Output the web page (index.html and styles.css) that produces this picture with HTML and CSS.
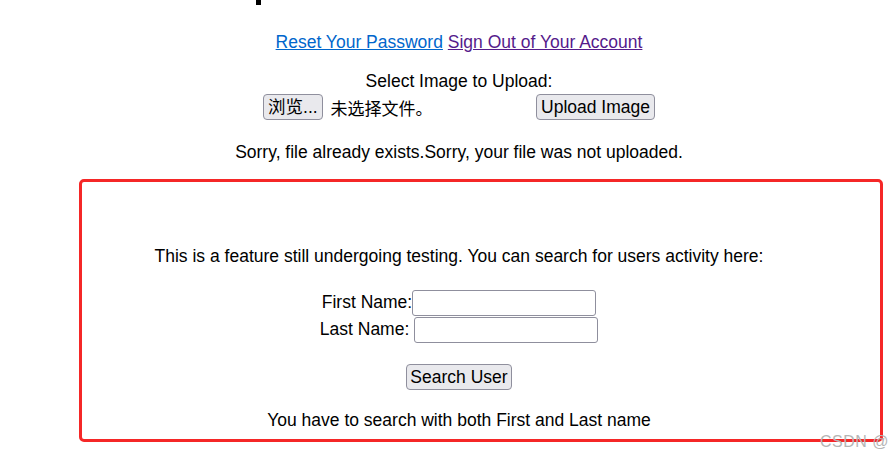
FILE: index.html
```html
<!DOCTYPE html>
<html>
<head>
<meta charset="utf-8">
<link rel="stylesheet" href="styles.css">
</head>
<body>
<div class="page">
  <div class="descender"></div>
  <p class="links"><a href="#" class="reset">Reset Your Password</a> <a href="#" class="signout">Sign Out of Your Account</a></p>
  <form class="upload">
    <div class="line">Select Image to Upload:</div>
    <div class="row">
      <span class="file"><button type="button" class="btn">浏览...</button> <span class="nofile">未选择文件。</span></span>
      <button type="button" class="btn">Upload Image</button>
    </div>
  </form>
  <p class="msg">Sorry, file already exists.Sorry, your file was not uploaded.</p>
  <div class="search">
    <div class="line">This is a feature still undergoing testing. You can search for users activity here:</div>
    <div class="field first">First Name:<input type="text" class="inp"></div>
    <div class="field">Last Name: <input type="text" class="inp"></div>
    <div class="submit"><button type="button" class="btn">Search User</button></div>
    <div class="line">You have to search with both First and Last name</div>
  </div>
</div>
<span class="watermark">CSDN @</span>
</body>
</html>
```
FILE: styles.css
```css
html, body {
  margin: 0;
  padding: 0;
  background: #fff;
  overflow: hidden;
}
body {
  font-family: "Liberation Sans", Arial, "Noto Sans CJK SC", sans-serif;
  font-size: 17.5px;
  color: #000;
  width: 891px;
  height: 450px;
  position: relative;
}
.page {
  width: 918px;
  text-align: center;
}
.descender {
  width: 5px;
  height: 5px;
  background: #000;
  margin-left: 256px;
}
.links {
  margin: 26px 0 0;
  line-height: 22px;
}
.links a {
  text-decoration: underline;
}
.reset { color: #0066cc; }
.signout { color: #551a8b; }
.upload {
  margin: 17px 0 0;
}
.line {
  line-height: 22px;
}
.row {
  margin-top: 2px;
  height: 26px;
  display: flex;
  justify-content: center;
  align-items: center;
  gap: 5px;
}
.file {
  display: inline-flex;
  align-items: center;
  width: 268px;
  text-align: left;
}
.nofile {
  margin-left: 8px;
  font-family: "Noto Sans CJK SC", sans-serif;
  font-size: 17px;
}
.btn {
  font-family: "Liberation Sans", Arial, "Noto Sans CJK SC", sans-serif;
  font-size: 17.5px;
  height: 26px;
  padding: 0 4px;
  background: #e9e9ed;
  border: 1px solid #8f8f9d;
  border-radius: 4px;
  color: #000;
  line-height: 22px;
}
.msg {
  margin: 21px 0 0;
  line-height: 22px;
}
.search {
  box-sizing: border-box;
  margin: 16px 0 0 79px;
  width: 804px;
  height: 263px;
  border: 3px solid #f52727;
  border-radius: 5px;
  padding: 63px 44px 0 0;
}
.field {
  height: 27px;
  line-height: 27px;
  text-align: center;
  white-space: nowrap;
}
.field.first {
  margin-top: 22px;
}
.inp {
  box-sizing: border-box;
  width: 184px;
  height: 26px;
  border: 1px solid #8f8f9d;
  border-radius: 3px;
  margin: 0;
  padding: 0 4px;
  font-size: 17.5px;
  vertical-align: middle;
}
.submit {
  margin-top: 21px;
  height: 26px;
  display: flex;
  justify-content: center;
}
.submit .btn {
  padding: 0 3px;
}
.submit + .line {
  margin-top: 19px;
}
.watermark {
  position: absolute;
  left: 820px;
  top: 433px;
  font-family: "Liberation Sans", Arial, sans-serif;
  font-size: 16px;
  color: #b5b5b5;
  letter-spacing: 0.5px;
  white-space: nowrap;
}
```
